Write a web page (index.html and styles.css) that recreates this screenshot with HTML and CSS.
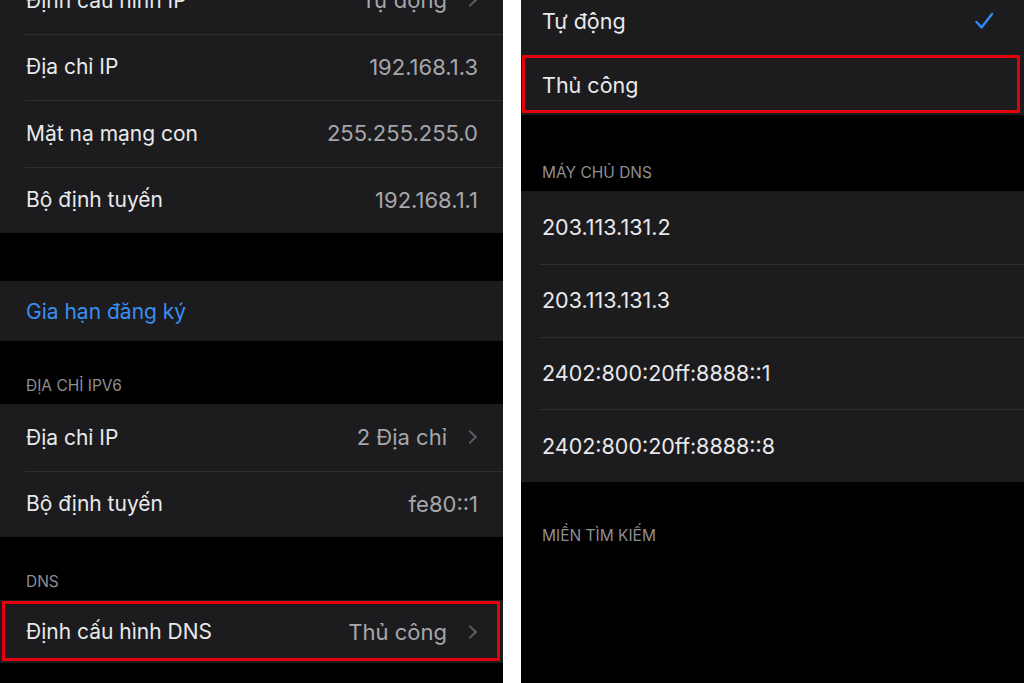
FILE: index.html
```html
<!DOCTYPE html>
<html lang="vi">
<head>
    <meta charset="UTF-8">
    <meta name="viewport" content="width=device-width, initial-scale=1.0">
    <title>Cấu hình DNS</title>
    <link rel="stylesheet" href="styles.css">
</head>
<body>
    <div class="screens">
        <!-- Màn hình 1: thông tin IP -->
        <div class="screen screen-ip">
            <div class="group group-top">
                <div class="row"><span class="label">Định cấu hình IP</span><span class="value">Tự động<i class="chevron"></i></span></div>
                <div class="row"><span class="label">Địa chỉ IP</span><span class="value">192.168.1.3</span></div>
                <div class="row"><span class="label">Mặt nạ mạng con</span><span class="value">255.255.255.0</span></div>
                <div class="row"><span class="label">Bộ định tuyến</span><span class="value">192.168.1.1</span></div>
            </div>

            <div class="group group-renew">
                <div class="row row-short"><span class="label link">Gia hạn đăng ký</span></div>
            </div>

            <div class="section-title">ĐỊA CHỈ IPV6</div>
            <div class="group">
                <div class="row"><span class="label">Địa chỉ IP</span><span class="value">2 Địa chỉ<i class="chevron"></i></span></div>
                <div class="row"><span class="label">Bộ định tuyến</span><span class="value">fe80::1</span></div>
            </div>

            <div class="section-title">DNS</div>
            <div class="group">
                <div class="row row-dns highlight"><span class="label">Định cấu hình DNS</span><span class="value">Thủ công<i class="chevron"></i></span></div>
            </div>
        </div>

        <!-- Màn hình 2: chọn chế độ DNS -->
        <div class="screen screen-dns">
            <div class="group group-mode">
                <div class="row row-mode row-first">
                    <span class="label">Tự động</span>
                    <svg class="check" width="20" height="20" viewBox="0 0 20 20"><path d="M2.5 11 L7.5 16.5 L18 3" fill="none" stroke="#2f8bf5" stroke-width="2.4" stroke-linecap="round" stroke-linejoin="round"/></svg>
                </div>
                <div class="row row-mode highlight"><span class="label">Thủ công</span></div>
            </div>

            <div class="section-title">MÁY CHỦ DNS</div>
            <div class="group">
                <div class="row row-server"><span class="label">203.113.131.2</span></div>
                <div class="row row-server"><span class="label">203.113.131.3</span></div>
                <div class="row row-server"><span class="label">2402:800:20ff:8888::1</span></div>
                <div class="row row-server"><span class="label">2402:800:20ff:8888::8</span></div>
            </div>

            <div class="section-title section-search">MIỀN TÌM KIẾM</div>
        </div>
    </div>
</body>
</html>
```

FILE: styles.css
```css
/* Hai ảnh chụp cài đặt iOS (chế độ tối) đặt cạnh nhau */
body {
    margin: 0;
    background-color: #fff;
    font-family: 'Inter', 'Roboto', sans-serif;
    -webkit-font-smoothing: antialiased;
}
.screens {
    display: flex;
    gap: 18px;
    height: 683px;
    overflow: hidden;
}
.screen {
    flex: 0 0 503px;
    background-color: #000;
    overflow: hidden;
    display: flex;
    flex-direction: column;
}
.screen-dns {
    flex: 1;
}
.group {
    background-color: #1c1c1e;
}
.group-top {
    margin-top: -33px;
}
.group-renew {
    margin-top: 48px;
}
.row {
    height: 66.5px;
    display: flex;
    align-items: center;
    justify-content: space-between;
    padding: 0 25px 0 26px;
    position: relative;
    box-sizing: border-box;
    font-size: 21px;
    color: #e9e9eb;
}
/* đường kẻ mảnh giữa các dòng, thụt vào bên trái */
.row + .row::before {
    content: '';
    position: absolute;
    top: 0;
    left: 25px;
    right: 0;
    height: 1px;
    background-color: #2f2f31;
}
.row-short {
    height: 60px;
}
.row-dns {
    height: 63px;
}
.link {
    color: #3a8ef0;
}
.value {
    display: flex;
    align-items: center;
    font-size: 22px;
    color: #a6a6ab;
}
.chevron {
    display: inline-block;
    width: 8px;
    height: 8px;
    margin-left: 18px;
    margin-right: 3px;
    border-top: 2px solid #5c5c60;
    border-right: 2px solid #5c5c60;
    transform: rotate(45deg);
}
.section-title {
    height: 63px;
    box-sizing: border-box;
    padding: 0 26px 9px;
    display: flex;
    align-items: flex-end;
    font-size: 15.5px;
    color: #8e8e93;
}

/* khung đỏ đánh dấu dòng được chọn */
.highlight::before {
    display: none;
}
.highlight::after {
    content: '';
    position: absolute;
    top: 1px;
    left: 2px;
    right: 3px;
    bottom: 2px;
    border: 3px solid #e5000e;
}
.screen-dns .highlight::after {
    top: 0;
    left: 1px;
    right: 4px;
    bottom: 2px;
}

/* màn hình bên phải */
.screen-dns .row {
    padding: 0 30px 0 21px;
    font-size: 21.5px;
}
.screen-dns .row + .row::before {
    left: 19px;
}
.row-mode {
    height: 60px;
}
.row-first {
    height: 68px;
    margin-top: -13px;
}
.screen-dns .section-title {
    height: 76px;
    padding: 0 21px 9px;
    font-size: 15.5px;
}
.row-server {
    height: 72.75px;
}
.screen-dns .section-search {
    height: 72px;
}
```
